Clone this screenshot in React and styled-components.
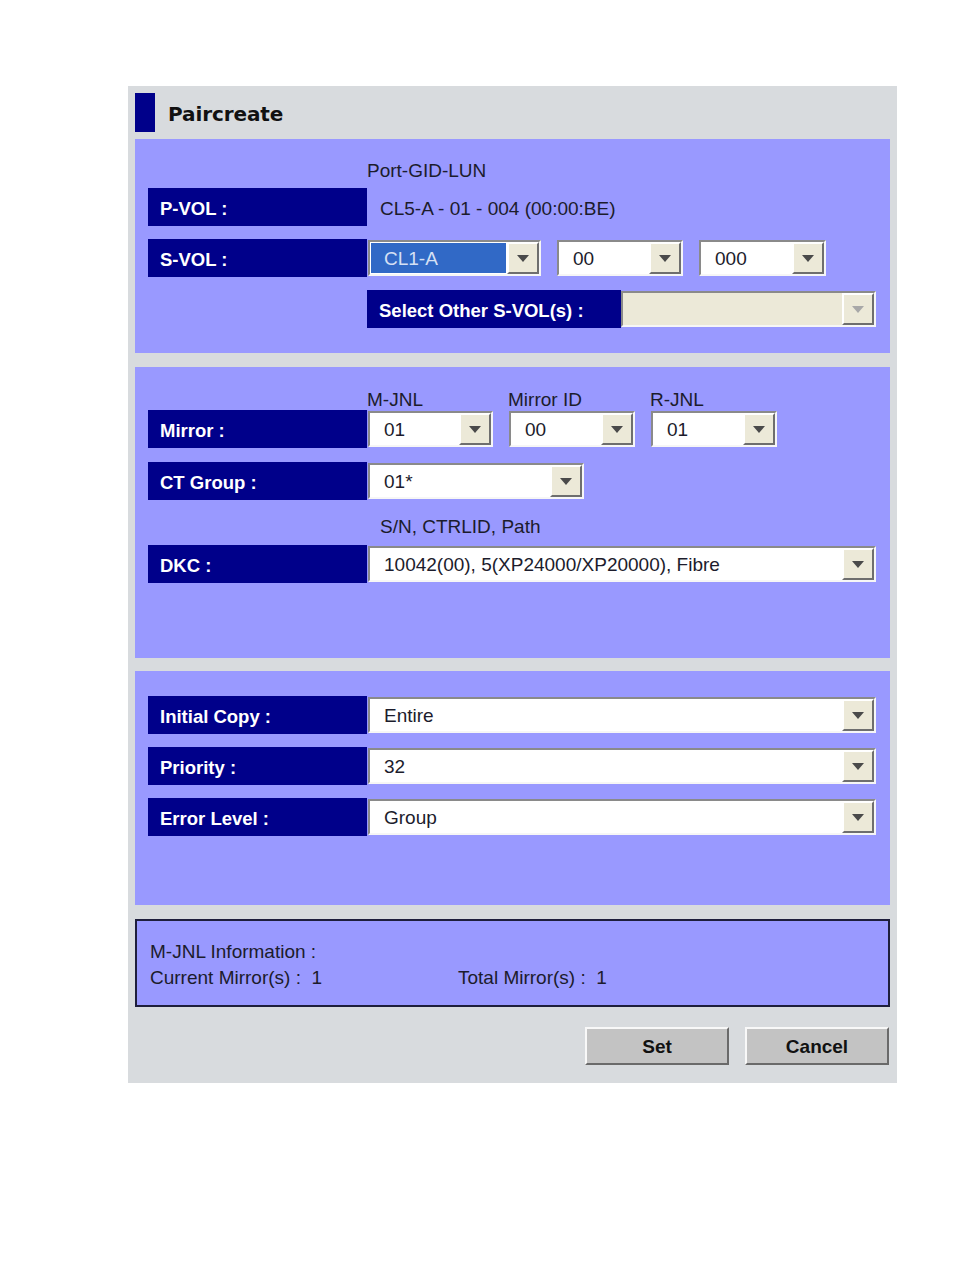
import React from "react";
import styled, { createGlobalStyle, css } from "styled-components";

const GlobalStyle = createGlobalStyle`
  html, body { margin: 0; padding: 0; background: #ffffff; }
  body { font-family: "Liberation Sans", Arial, sans-serif; }
  * { box-sizing: border-box; }
`;

const Page = styled.div`
  padding: 86px 0 0 128px;
  width: 954px;
  height: 1270px;
`;

const Panel = styled.div`
  width: 769px;
  background: #d8dbde;
  padding: 7px 7px 18px 7px;
  display: flex;
  flex-direction: column;
`;

const TitleBar = styled.div`
  display: flex;
  align-items: center;
  height: 39px;
  gap: 13px;
`;

const Marker = styled.div`
  width: 20px;
  height: 39px;
  background: #00008a;
`;

const Title = styled.h1`
  margin: 0;
  font-family: "DejaVu Sans", Verdana, sans-serif;
  font-weight: bold;
  font-size: 20px;
  color: #111;
  letter-spacing: -0.1px;
  padding-top: 3px;
`;

const Section = styled.div`
  background: #9999ff;
  margin-top: ${(p) => p.$mt}px;
  padding: ${(p) => p.$pt}px 14px ${(p) => p.$pb}px 13px;
  display: flex;
  flex-direction: column;
`;

const HeaderRow = styled.div`
  display: flex;
  height: 16px;
  line-height: 16px;
  font-size: 19px;
  color: #1c1c2c;
  padding-left: ${(p) => p.$indent}px;
  margin-top: ${(p) => p.$mt || 0}px;
  margin-bottom: ${(p) => p.$mb || 0}px;
  gap: 16px;
`;

const HeaderCell = styled.span`
  width: ${(p) => p.$w}px;
  white-space: nowrap;
`;

const Row = styled.div`
  display: flex;
  align-items: center;
  height: 38px;
  gap: 16px;
  margin-top: ${(p) => p.$mt || 0}px;
  padding-left: ${(p) => p.$indent || 0}px;
`;

const Label = styled.div`
  width: ${(p) => p.$w || 219}px;
  height: 38px;
  background: #00008a;
  color: #ffffff;
  font-weight: bold;
  font-size: 18.5px;
  display: flex;
  align-items: center;
  padding: 3px 0 0 12px;
  margin-right: ${(p) => p.$mr ?? -15}px;
  white-space: pre;
  flex-shrink: 0;
`;

const Value = styled.div`
  font-size: 19px;
  color: #1c1c2c;
  padding: 3px 0 0 12px;
  white-space: nowrap;
`;

const SelectBox = styled.div`
  width: ${(p) => p.$w}px;
  height: 36px;
  display: flex;
  align-items: stretch;
  border: 2px solid;
  border-color: #8a8a8a #f6f6f6 #f6f6f6 #8a8a8a;
  background: ${(p) => (p.$disabled ? "#ece9d8" : "#ffffff")};
  flex-shrink: 0;
`;

const SelectText = styled.div`
  flex: 1;
  display: flex;
  align-items: center;
  font-size: 19px;
  color: #1c1c2c;
  padding: 2px 0 0 14px;
  white-space: nowrap;
  ${(p) =>
    p.$selected &&
    css`
      background: #3169c6;
      color: #d6e0f4;
      margin: 1px 0 1px 1px;
      padding-left: 13px;
    `}
`;

const ArrowButton = styled.div`
  width: 32px;
  margin: 0 0 0 1px;
  background: #ece9d8;
  border: 2px solid;
  border-color: #ffffff #6e6e6e #6e6e6e #ffffff;
  display: flex;
  align-items: center;
  justify-content: center;
`;

const Triangle = styled.span`
  width: 0;
  height: 0;
  border-left: 6px solid transparent;
  border-right: 6px solid transparent;
  border-top: 7px solid ${(p) => (p.$disabled ? "#a8a8a8" : "#4a4a4a")};
`;

const InfoBox = styled.div`
  margin-top: 14px;
  border: 2px solid #1e1e3c;
  background: #9999ff;
  padding: 18px 13px 14px 13px;
  font-size: 19px;
  color: #1c1c2c;
  line-height: 26px;
`;

const InfoLine = styled.div`
  display: flex;
  white-space: pre;
`;

const InfoCell = styled.span`
  width: ${(p) => p.$w}px;
`;

const ButtonRow = styled.div`
  margin-top: 20px;
  display: flex;
  justify-content: flex-end;
  gap: 16px;
  padding-right: 1px;
`;

const Button = styled.button`
  width: 144px;
  height: 38px;
  background: #c3c3c3;
  border: 2px solid;
  border-color: #f8f8f8 #6a6a6a #6a6a6a #f8f8f8;
  font-family: "Liberation Sans", Arial, sans-serif;
  font-weight: bold;
  font-size: 19px;
  color: #111;
  padding: 2px 0 0 0;
`;

function Select({ w, text, selected, disabled }) {
  return (
    <SelectBox $w={w} $disabled={disabled}>
      <SelectText $selected={selected}>{text}</SelectText>
      <ArrowButton>
        <Triangle $disabled={disabled} />
      </ArrowButton>
    </SelectBox>
  );
}

export default function App() {
  return (
    <>
      <GlobalStyle />
      <Page>
        <Panel>
          <TitleBar>
            <Marker />
            <Title>Paircreate</Title>
          </TitleBar>

          <Section $mt={7} $pt={24} $pb={25}>
            <HeaderRow $indent={219} $mb={9}>
              <HeaderCell $w={200}>Port-GID-LUN</HeaderCell>
            </HeaderRow>
            <Row>
              <Label>P-VOL :</Label>
              <Value>CL5-A - 01 - 004 (00:00:BE)</Value>
            </Row>
            <Row $mt={13}>
              <Label>S-VOL :</Label>
              <Select w={173} text="CL1-A" selected />
              <Select w={126} text="00" />
              <Select w={127} text="000" />
            </Row>
            <Row $mt={13} $indent={219}>
              <Label $w={254} $mr={-16}>Select Other S-VOL(s) :</Label>
              <Select w={255} text="" disabled />
            </Row>
          </Section>

          <Section $mt={14} $pt={25} $pb={75}>
            <HeaderRow $indent={219} $mb={2}>
              <HeaderCell $w={125}>M-JNL</HeaderCell>
              <HeaderCell $w={126}>Mirror ID</HeaderCell>
              <HeaderCell $w={126}>R-JNL</HeaderCell>
            </HeaderRow>
            <Row>
              <Label>Mirror :</Label>
              <Select w={125} text="01" />
              <Select w={126} text="00" />
              <Select w={126} text="01" />
            </Row>
            <Row $mt={14}>
              <Label>CT Group :</Label>
              <Select w={216} text="01*" />
            </Row>
            <HeaderRow $indent={232} $mt={19} $mb={10}>
              <HeaderCell $w={300}>S/N, CTRLID, Path</HeaderCell>
            </HeaderRow>
            <Row>
              <Label>DKC :</Label>
              <Select w={508} text="10042(00), 5(XP24000/XP20000), Fibre" />
            </Row>
          </Section>

          <Section $mt={13} $pt={25} $pb={69}>
            <Row>
              <Label>Initial Copy :</Label>
              <Select w={508} text="Entire" />
            </Row>
            <Row $mt={13}>
              <Label>Priority :</Label>
              <Select w={508} text="32" />
            </Row>
            <Row $mt={13}>
              <Label>Error Level :</Label>
              <Select w={508} text="Group" />
            </Row>
          </Section>

          <InfoBox>
            <InfoLine>M-JNL Information :</InfoLine>
            <InfoLine>
              <InfoCell $w={308}>Current Mirror(s) :  1</InfoCell>
              <InfoCell $w={200}>Total Mirror(s) :  1</InfoCell>
            </InfoLine>
          </InfoBox>

          <ButtonRow>
            <Button>Set</Button>
            <Button>Cancel</Button>
          </ButtonRow>
        </Panel>
      </Page>
    </>
  );
}
